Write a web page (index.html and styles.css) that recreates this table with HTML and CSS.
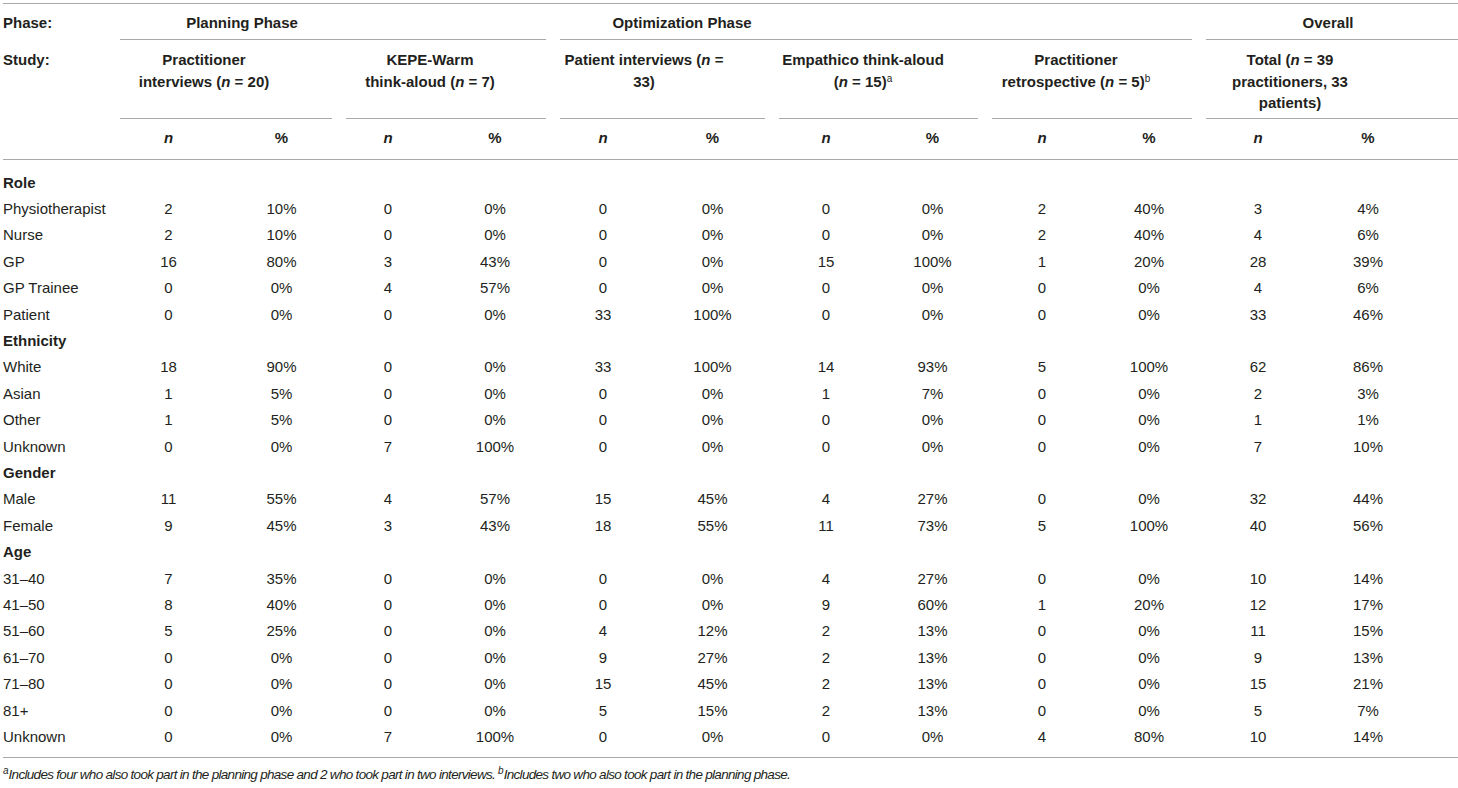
FILE: index.html
```html
<!DOCTYPE html>
<html lang="en">
<head>
<meta charset="utf-8">
<title>Participant characteristics</title>
<link rel="stylesheet" href="styles.css">
</head>
<body>
<div class="page">
<table class="tbl">
<colgroup>
<col class="c-lab"><col class="c1n"><col class="c1p"><col class="c2n"><col class="c2p"><col class="c3n"><col class="c3p"><col class="c4n"><col class="c4p"><col class="c5n"><col class="c5p"><col class="c6n"><col class="c6p">
</colgroup>
<thead>
<tr class="r-phase">
<th class="lab">Phase:</th>
<th class="grp phase" colspan="4"><span class="phase-text">Planning Phase</span></th>
<th class="grp phase" colspan="6"><span class="phase-text">Optimization Phase</span></th>
<th class="grp grp-last phase" colspan="2"><span class="phase-text">Overall</span></th>
</tr>
<tr class="r-study">
<th class="lab">Study:</th>
<th class="grp study" colspan="2"><span class="study-text">Practitioner<br>interviews (<i>n</i> = 20)</span></th>
<th class="grp study" colspan="2"><span class="study-text">KEPE-Warm<br>think-aloud (<i>n</i> = 7)</span></th>
<th class="grp study" colspan="2"><span class="study-text">Patient interviews (<i>n</i> =<br>33)</span></th>
<th class="grp study" colspan="2"><span class="study-text">Empathico think-aloud<br>(<i>n</i> = 15)<sup>a</sup></span></th>
<th class="grp study" colspan="2"><span class="study-text">Practitioner<br>retrospective (<i>n</i> = 5)<sup>b</sup></span></th>
<th class="grp grp-last study" colspan="2"><span class="study-text">Total (<i>n</i> = 39<br>practitioners, 33<br>patients)</span></th>
</tr>
<tr class="r-n">
<th class="lab"></th>
<th class="num"><i>n</i></th><th class="num">%</th>
<th class="num"><i>n</i></th><th class="num">%</th>
<th class="num"><i>n</i></th><th class="num">%</th>
<th class="num"><i>n</i></th><th class="num">%</th>
<th class="num"><i>n</i></th><th class="num">%</th>
<th class="num"><i>n</i></th><th class="num">%</th>
</tr>
</thead>
<tbody>
<tr class="cat"><td class="lab">Role</td><td colspan="12"></td></tr>
<tr><td class="lab">Physiotherapist</td><td class="num">2</td><td class="num">10%</td><td class="num">0</td><td class="num">0%</td><td class="num">0</td><td class="num">0%</td><td class="num">0</td><td class="num">0%</td><td class="num">2</td><td class="num">40%</td><td class="num">3</td><td class="num">4%</td></tr>
<tr><td class="lab">Nurse</td><td class="num">2</td><td class="num">10%</td><td class="num">0</td><td class="num">0%</td><td class="num">0</td><td class="num">0%</td><td class="num">0</td><td class="num">0%</td><td class="num">2</td><td class="num">40%</td><td class="num">4</td><td class="num">6%</td></tr>
<tr><td class="lab">GP</td><td class="num">16</td><td class="num">80%</td><td class="num">3</td><td class="num">43%</td><td class="num">0</td><td class="num">0%</td><td class="num">15</td><td class="num">100%</td><td class="num">1</td><td class="num">20%</td><td class="num">28</td><td class="num">39%</td></tr>
<tr><td class="lab">GP Trainee</td><td class="num">0</td><td class="num">0%</td><td class="num">4</td><td class="num">57%</td><td class="num">0</td><td class="num">0%</td><td class="num">0</td><td class="num">0%</td><td class="num">0</td><td class="num">0%</td><td class="num">4</td><td class="num">6%</td></tr>
<tr><td class="lab">Patient</td><td class="num">0</td><td class="num">0%</td><td class="num">0</td><td class="num">0%</td><td class="num">33</td><td class="num">100%</td><td class="num">0</td><td class="num">0%</td><td class="num">0</td><td class="num">0%</td><td class="num">33</td><td class="num">46%</td></tr>
<tr class="cat"><td class="lab">Ethnicity</td><td colspan="12"></td></tr>
<tr><td class="lab">White</td><td class="num">18</td><td class="num">90%</td><td class="num">0</td><td class="num">0%</td><td class="num">33</td><td class="num">100%</td><td class="num">14</td><td class="num">93%</td><td class="num">5</td><td class="num">100%</td><td class="num">62</td><td class="num">86%</td></tr>
<tr><td class="lab">Asian</td><td class="num">1</td><td class="num">5%</td><td class="num">0</td><td class="num">0%</td><td class="num">0</td><td class="num">0%</td><td class="num">1</td><td class="num">7%</td><td class="num">0</td><td class="num">0%</td><td class="num">2</td><td class="num">3%</td></tr>
<tr><td class="lab">Other</td><td class="num">1</td><td class="num">5%</td><td class="num">0</td><td class="num">0%</td><td class="num">0</td><td class="num">0%</td><td class="num">0</td><td class="num">0%</td><td class="num">0</td><td class="num">0%</td><td class="num">1</td><td class="num">1%</td></tr>
<tr><td class="lab">Unknown</td><td class="num">0</td><td class="num">0%</td><td class="num">7</td><td class="num">100%</td><td class="num">0</td><td class="num">0%</td><td class="num">0</td><td class="num">0%</td><td class="num">0</td><td class="num">0%</td><td class="num">7</td><td class="num">10%</td></tr>
<tr class="cat"><td class="lab">Gender</td><td colspan="12"></td></tr>
<tr><td class="lab">Male</td><td class="num">11</td><td class="num">55%</td><td class="num">4</td><td class="num">57%</td><td class="num">15</td><td class="num">45%</td><td class="num">4</td><td class="num">27%</td><td class="num">0</td><td class="num">0%</td><td class="num">32</td><td class="num">44%</td></tr>
<tr><td class="lab">Female</td><td class="num">9</td><td class="num">45%</td><td class="num">3</td><td class="num">43%</td><td class="num">18</td><td class="num">55%</td><td class="num">11</td><td class="num">73%</td><td class="num">5</td><td class="num">100%</td><td class="num">40</td><td class="num">56%</td></tr>
<tr class="cat"><td class="lab">Age</td><td colspan="12"></td></tr>
<tr><td class="lab">31–40</td><td class="num">7</td><td class="num">35%</td><td class="num">0</td><td class="num">0%</td><td class="num">0</td><td class="num">0%</td><td class="num">4</td><td class="num">27%</td><td class="num">0</td><td class="num">0%</td><td class="num">10</td><td class="num">14%</td></tr>
<tr><td class="lab">41–50</td><td class="num">8</td><td class="num">40%</td><td class="num">0</td><td class="num">0%</td><td class="num">0</td><td class="num">0%</td><td class="num">9</td><td class="num">60%</td><td class="num">1</td><td class="num">20%</td><td class="num">12</td><td class="num">17%</td></tr>
<tr><td class="lab">51–60</td><td class="num">5</td><td class="num">25%</td><td class="num">0</td><td class="num">0%</td><td class="num">4</td><td class="num">12%</td><td class="num">2</td><td class="num">13%</td><td class="num">0</td><td class="num">0%</td><td class="num">11</td><td class="num">15%</td></tr>
<tr><td class="lab">61–70</td><td class="num">0</td><td class="num">0%</td><td class="num">0</td><td class="num">0%</td><td class="num">9</td><td class="num">27%</td><td class="num">2</td><td class="num">13%</td><td class="num">0</td><td class="num">0%</td><td class="num">9</td><td class="num">13%</td></tr>
<tr><td class="lab">71–80</td><td class="num">0</td><td class="num">0%</td><td class="num">0</td><td class="num">0%</td><td class="num">15</td><td class="num">45%</td><td class="num">2</td><td class="num">13%</td><td class="num">0</td><td class="num">0%</td><td class="num">15</td><td class="num">21%</td></tr>
<tr><td class="lab">81+</td><td class="num">0</td><td class="num">0%</td><td class="num">0</td><td class="num">0%</td><td class="num">5</td><td class="num">15%</td><td class="num">2</td><td class="num">13%</td><td class="num">0</td><td class="num">0%</td><td class="num">5</td><td class="num">7%</td></tr>
<tr><td class="lab">Unknown</td><td class="num">0</td><td class="num">0%</td><td class="num">7</td><td class="num">100%</td><td class="num">0</td><td class="num">0%</td><td class="num">0</td><td class="num">0%</td><td class="num">4</td><td class="num">80%</td><td class="num">10</td><td class="num">14%</td></tr>
</tbody>
</table>
<p class="foot"><sup>a</sup>Includes four who also took part in the planning phase and 2 who took part in two interviews. <sup>b</sup>Includes two who also took part in the planning phase.</p>
</div>
</body>
</html>
```
FILE: styles.css
```css
html, body {
  margin: 0;
  background: #ffffff;
}
body {
  color: #231f20;
  font-family: "Liberation Sans", Arial, sans-serif;
  font-size: 15px;
}
.page {
  padding: 3px 0 0 3px;
}
.tbl {
  border-collapse: collapse;
  table-layout: fixed;
  width: 1455px;
  border-top: 1px solid #a9a9a9;
}
.c-lab { width: 110px; }
.c1n { width: 111px; }
.c1p { width: 115px; }
.c2n { width: 98px; }
.c2p { width: 116px; }
.c3n { width: 100px; }
.c3p { width: 119px; }
.c4n { width: 108px; }
.c4p { width: 105px; }
.c5n { width: 114px; }
.c5p { width: 100px; }
.c6n { width: 118px; }
.c6p { width: 141px; }

th, td {
  padding: 0;
  font-weight: normal;
  vertical-align: top;
}
thead th {
  font-weight: bold;
  line-height: 21px;
}
.lab {
  text-align: left;
}
.num {
  text-align: center;
}
.num:last-child {
  padding-right: 39px;
}
.grp {
  background: linear-gradient(#a9a9a9, #a9a9a9) center bottom / calc(100% - 14px) 1px no-repeat;
}
.grp-last {
  background-position: right bottom;
  background-size: calc(100% - 7px) 1px;
}
.r-phase th {
  padding-top: 8px;
  padding-bottom: 7px;
}
.r-study th {
  padding-top: 9px;
  padding-bottom: 5.5px;
  line-height: 21.5px;
}
.phase, .study {
  text-align: left;
  padding-left: 7px;
}
.phase-text {
  display: inline-block;
  width: 244px;
  text-align: center;
}
.study-text {
  display: inline-block;
  width: 168px;
  text-align: center;
}
sup {
  font-size: 10px;
  font-weight: normal;
  line-height: 0;
  vertical-align: 5px;
}
.r-n th {
  padding-top: 8px;
  padding-bottom: 11px;
  border-bottom: 1px solid #a9a9a9;
}
tbody td {
  line-height: 20.4px;
  padding-top: 3px;
  padding-bottom: 3px;
}
tbody tr:first-child td {
  padding-top: 12.5px;
}
tbody tr:last-child td {
  padding-bottom: 10px;
  border-bottom: 1px solid #a9a9a9;
}
.cat td {
  font-weight: bold;
}
.foot {
  margin: 9px 0 0;
  font-size: 13.5px;
  line-height: 16px;
  font-style: italic;
  letter-spacing: -0.7px;
  white-space: nowrap;
}
.foot sup {
  font-size: 10px;
  letter-spacing: 0;
  vertical-align: 5px;
}
```
